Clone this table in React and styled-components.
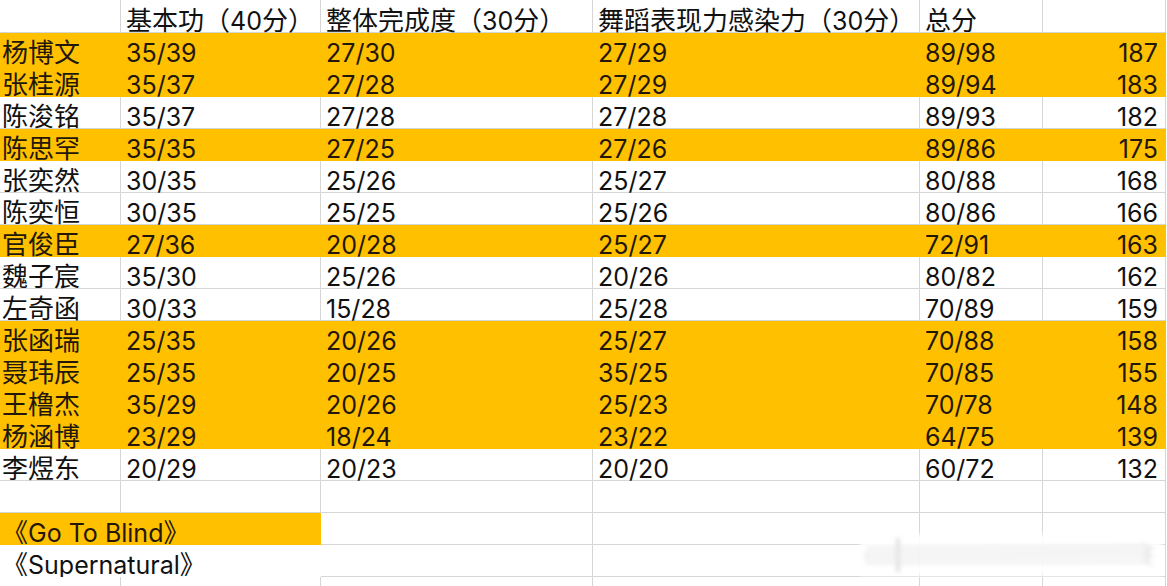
import React from "react";
import styled, { createGlobalStyle } from "styled-components";

const ORANGE = "#FFC000";
const GRID = "#d6d6d6";

const Global = createGlobalStyle`
  html, body { margin: 0; padding: 0; background: #fff; }
  body { overflow: hidden; font-family: Inter, "Noto Sans CJK SC", sans-serif; }
`;

const Sheet = styled.div`
  position: relative;
  width: 1167px;
  height: 586px;
  overflow: hidden;
  background: #fff;
`;

const Row = styled.div`
  display: grid;
  grid-template-columns: 121px 200px 272px 327px 123px 123px;
  height: ${(p) => p.$h || 32}px;
`;

const Cell = styled.div`
  box-sizing: border-box;
  grid-column: span ${(p) => p.$span || 1};
  display: flex;
  align-items: flex-end;
  justify-content: ${(p) => (p.$right ? "flex-end" : "flex-start")};
  padding: 0 ${(p) => (p.$right ? 7 : 0)}px 0 ${(p) => (p.$pl ?? 5)}px;
  background: ${(p) => (p.$fill ? ORANGE : "#fff")};
  border-right: 1px solid ${(p) => (p.$fill ? ORANGE : p.$noRight ? "#fff" : GRID)};
  border-bottom: 1px solid ${(p) => (p.$fill ? ORANGE : p.$noBottom ? "#fff" : GRID)};
  font-size: 25px;
  line-height: 22px;
  color: ${(p) => (p.$fill ? "#23170a" : "#111")};
  white-space: nowrap;
`;

const Text = styled.span`
  display: inline-block;
  line-height: 22px;
`;

const Han = styled.span`
  font-family: "Noto Sans CJK SC", sans-serif;
  font-size: 26px;
  line-height: 22px;
`;

const Watermark = styled.div`
  position: absolute;
  left: 860px;
  top: 534px;
  width: 302px;
  height: 42px;
  background: rgba(255, 255, 255, 0.9);
  filter: blur(2px);
`;

const header = ["", "基本功（40分）", "整体完成度（30分）", "舞蹈表现力感染力（30分）", "总分", ""];

const data = [
  ["杨博文", "35/39", "27/30", "27/29", "89/98", "187", true],
  ["张桂源", "35/37", "27/28", "27/29", "89/94", "183", true],
  ["陈浚铭", "35/37", "27/28", "27/28", "89/93", "182", false],
  ["陈思罕", "35/35", "27/25", "27/26", "89/86", "175", true],
  ["张奕然", "30/35", "25/26", "25/27", "80/88", "168", false],
  ["陈奕恒", "30/35", "25/25", "25/26", "80/86", "166", false],
  ["官俊臣", "27/36", "20/28", "25/27", "72/91", "163", true],
  ["魏子宸", "35/30", "25/26", "20/26", "80/82", "162", false],
  ["左奇函", "30/33", "15/28", "25/28", "70/89", "159", false],
  ["张函瑞", "25/35", "20/26", "25/27", "70/88", "158", true],
  ["聂玮辰", "25/35", "20/25", "35/25", "70/85", "155", true],
  ["王橹杰", "35/29", "20/26", "25/23", "70/78", "148", true],
  ["杨涵博", "23/29", "18/24", "23/22", "64/75", "139", true],
  ["李煜东", "20/29", "20/23", "20/20", "60/72", "132", false],
];

// split a string into CJK and non-CJK runs so ideographs get their own size
function Mixed({ children }) {
  const s = String(children || "");
  const parts = s.match(/[\u3000-\u303f\u4e00-\u9fff\uff00-\uffef]+|[^\u3000-\u303f\u4e00-\u9fff\uff00-\uffef]+/g) || [];
  return (
    <Text>
      {parts.map((p, i) =>
        /[\u3000-\u303f\u4e00-\u9fff\uff00-\uffef]/.test(p) ? <Han key={i}>{p}</Han> : <React.Fragment key={i}>{p}</React.Fragment>
      )}
    </Text>
  );
}

function WatermarkMark() {
  return (
    <Watermark>
      <svg width="302" height="42" viewBox="0 0 302 42">
        <g stroke="#e6e6e6" strokeWidth="2" fill="none">
          <path d="M6 18 L6 26" />
          <path d="M38 4 L38 38" stroke="#e0e0e0" strokeWidth="4" />
          <path d="M6 14 L290 12" />
          <path d="M6 19 L290 17" />
          <path d="M6 24 L290 22" />
          <path d="M6 29 L290 28" />
          <path d="M282 10 L292 14 L284 18 L292 22 L284 27 L292 31" />
        </g>
      </svg>
    </Watermark>
  );
}

export default function App() {
  return (
    <>
      <Global />
      <Sheet>
        <Row $h={33}>
          {header.map((h, i) => (
            <Cell key={i} $pl={i === 0 ? 2 : 5}>
              <Mixed>{h}</Mixed>
            </Cell>
          ))}
        </Row>
        {data.map((r) => {
          const fill = r[6];
          return (
            <Row key={r[0]}>
              <Cell $fill={fill} $pl={2}><Mixed>{r[0]}</Mixed></Cell>
              <Cell $fill={fill}>{r[1]}</Cell>
              <Cell $fill={fill}>{r[2]}</Cell>
              <Cell $fill={fill}>{r[3]}</Cell>
              <Cell $fill={fill}>{r[4]}</Cell>
              <Cell $fill={fill} $right>{r[5]}</Cell>
            </Row>
          );
        })}
        <Row>
          <Cell />
          <Cell />
          <Cell />
          <Cell />
          <Cell />
          <Cell />
        </Row>
        <Row>
          <Cell $fill $span={2} $pl={2}><Mixed>《Go To Blind》</Mixed></Cell>
          <Cell />
          <Cell />
          <Cell />
          <Cell />
        </Row>
        <Row>
          <Cell $span={2} $pl={2} $noRight $noBottom><Mixed>《Supernatural》</Mixed></Cell>
          <Cell />
          <Cell />
          <Cell />
          <Cell />
        </Row>
        <Row>
          <Cell />
          <Cell />
          <Cell />
          <Cell />
          <Cell />
          <Cell />
        </Row>
        <WatermarkMark />
      </Sheet>
    </>
  );
}
